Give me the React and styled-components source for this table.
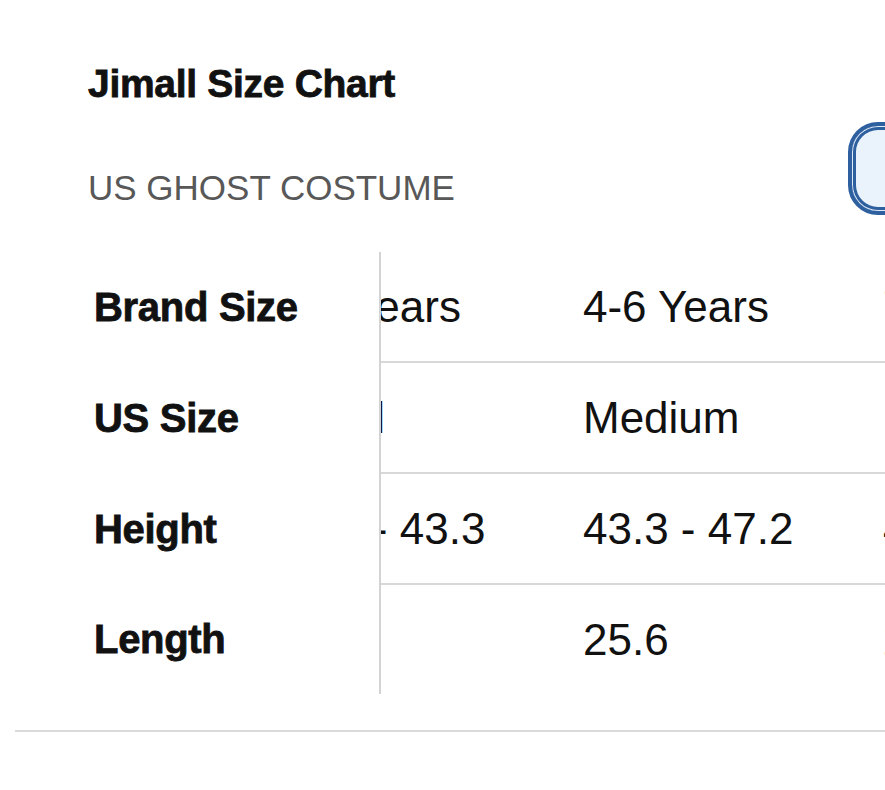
import { useLayoutEffect, useRef } from 'react';
import styled, { createGlobalStyle } from 'styled-components';

const GlobalStyle = createGlobalStyle`
    html, body {
        margin: 0;
        padding: 0;
        background: #fff;
        overflow: hidden;
    }
    body {
        font-family: 'Liberation Sans', Arial, sans-serif;
        color: #111;
    }
`

const Page = styled.div`
    width: 100%;
    padding-left: 15px;
    box-sizing: border-box;
    overflow: hidden;
`

const Header = styled.div`
    display: flex;
    align-items: flex-start;
    padding: 61px 0 0 73px;
`

const TitleBlock = styled.div`
    flex: 1;
    display: flex;
    flex-direction: column;
`

const Title = styled.h1`
    margin: 0;
    font-size: 39px;
    line-height: 46px;
    font-weight: bold;
    letter-spacing: -0.3px;
    -webkit-text-stroke: 0.8px #111;
    color: #111;
`

const Subtitle = styled.h2`
    margin: 60px 0 0 0;
    font-size: 35px;
    line-height: 42px;
    font-weight: normal;
    color: #585858;
`

const UnitButton = styled.button`
    flex: none;
    width: 200px;
    height: 93px;
    margin: 61px -163px 0 0;
    border: 4px solid #2e5f9f;
    border-radius: 30px;
    background: #eaf3fc;
    box-shadow: inset 0 0 0 1px #dfeaf7, inset 0 0 0 4px #2e5f9f;
`

const ScrollArea = styled.div`
    margin-top: 37px;
    width: 100%;
    overflow-x: auto;
    scrollbar-width: none;
    &::-webkit-scrollbar {
        display: none;
    }
`

const Table = styled.table`
    border-collapse: separate;
    border-spacing: 0;
    table-layout: fixed;
    width: 1574px;
`

const Col = styled.col`
    width: ${({ $width }) => $width}px;
`

const RowLabel = styled.th`
    position: sticky;
    left: 0;
    z-index: 1;
    box-sizing: border-box;
    height: ${({ $last }) => ($last ? '109px' : '111px')};
    padding: 0 0 0 79px;
    background: #fff;
    border-right: 2px solid #d3d3d3;
    text-align: left;
    vertical-align: middle;
    font-size: 40px;
    font-weight: bold;
    letter-spacing: -0.3px;
    -webkit-text-stroke: 0.8px #111;
    color: #111;
    white-space: nowrap;
`

const Cell = styled.td`
    box-sizing: border-box;
    height: ${({ $last }) => ($last ? '109px' : '111px')};
    padding: 0 0 0 22px;
    border-bottom: ${({ $last }) => ($last ? 'none' : '2px solid #d8d8d8')};
    vertical-align: middle;
    font-size: 44px;
    color: #111;
    white-space: nowrap;
`

const Rule = styled.div`
    margin-top: 36px;
    height: 2px;
    background: #dadada;
`

const columnWidths = [366, 308, 300, 300, 300];

const rows = [
    { label: 'Brand Size', values: ['2-4 Years', '4-6 Years', '7-9 Years', '10-12 Years'] },
    { label: 'US Size', values: ['Small', 'Medium', 'Large', 'X-Large'] },
    { label: 'Height', values: ['39.4 - 43.3', '43.3 - 47.2', '47.2 - 51.2', '51.2 - 55.1'] },
    { label: 'Length', values: ['23.6', '25.6', '27.6', '29.5'] },
]

const App = () => {
    const scrollRef = useRef(null);

    useLayoutEffect(() => {
        if (scrollRef.current) scrollRef.current.scrollLeft = 128;
    }, []);

    return (
        <>
            <GlobalStyle />
            <Page>
                <Header>
                    <TitleBlock>
                        <Title>Jimall Size Chart</Title>
                        <Subtitle>US GHOST COSTUME</Subtitle>
                    </TitleBlock>
                    <UnitButton aria-label="Size unit" />
                </Header>
                <ScrollArea ref={scrollRef}>
                    <Table>
                        <colgroup>
                            {columnWidths.map((w, i) => (
                                <Col key={i} $width={w} />
                            ))}
                        </colgroup>
                        <tbody>
                            {rows.map((row, i) => {
                                const last = i === rows.length - 1;
                                return (
                                    <tr key={row.label}>
                                        <RowLabel $last={last}>{row.label}</RowLabel>
                                        {row.values.map((v) => (
                                            <Cell key={v} $last={last}>{v}</Cell>
                                        ))}
                                    </tr>
                                );
                            })}
                        </tbody>
                    </Table>
                </ScrollArea>
                <Rule />
            </Page>
        </>
    )
}

export default App;
